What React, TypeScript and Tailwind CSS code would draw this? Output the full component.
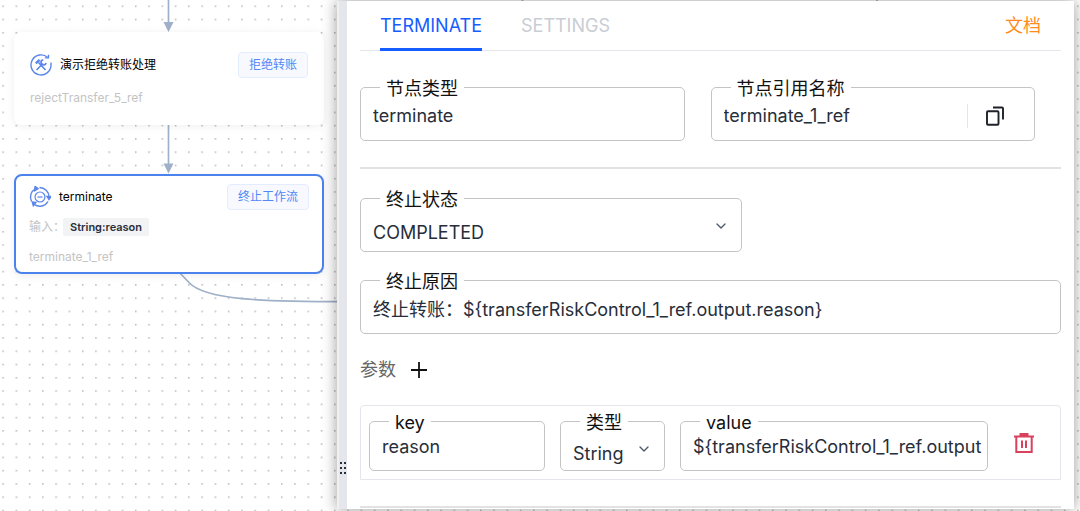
import { useState } from "react";
import type { ReactNode } from "react";
import { ChevronDown } from "lucide-react";

const inputClass =
  "w-full min-w-0 bg-transparent text-lg leading-6 text-[#272e3b] outline-none";

function Field({
  id,
  label,
  className = "",
  children,
}: {
  id: string;
  label: string;
  className?: string;
  children: ReactNode;
}) {
  return (
    <fieldset className={`min-w-0 rounded-[5px] border border-[#c4c4c4] ${className}`}>
      <legend className="ml-[19px] px-1.5 text-lg leading-[21px] text-[#111]">
        <label htmlFor={id} className="block pt-[3px]">
          {label}
        </label>
      </legend>
      {children}
    </fieldset>
  );
}

function SelectBox({
  id,
  value,
  onChange,
  options,
  className,
}: {
  id: string;
  value: string;
  onChange: (v: string) => void;
  options: string[];
  className: string;
}) {
  return (
    <div className="relative">
      <select
        id={id}
        value={value}
        onChange={(e) => onChange(e.target.value)}
        className={`block appearance-none px-3 pt-1 ${inputClass} ${className}`}
      >
        {options.map((o) => (
          <option key={o}>{o}</option>
        ))}
      </select>
      <ChevronDown
        className="pointer-events-none absolute top-2 right-3 size-4 text-[#4e5969]"
        strokeWidth={2}
      />
    </div>
  );
}

function ToolsIcon() {
  return (
    <svg viewBox="0 0 22 22" className="size-[22px]" fill="none" stroke="#5b86ec" strokeWidth="1.4">
      <path d="M17.800 3.600A10 10 0 1 0 21 11V8.500" />
      <path d="M14.800 3.900h3.700V.8" />
      <path d="M8.500 8.500l7 7.500M13 9.500L6.500 16" strokeWidth="1.600" />
      <path d="M5.800 9.300l3.800-3.400" strokeWidth="2.400" />
      <path d="M13.200 5.800a2.600 2.600 0 1 0 2.900 3.200" strokeWidth="1.700" />
    </svg>
  );
}

function TerminateIcon() {
  return (
    <svg viewBox="0 0 22 22" className="size-[22px]" fill="none" stroke="#5b86ec" strokeWidth="1.400">
      <path d="M10.500 1.500A9.500 9.500 0 0 1 20 11M19 15.500A9.500 9.500 0 0 1 5.500 18.700M2.600 15.500A9.500 9.500 0 0 1 6.300 2.800" />
      <circle cx="11" cy="11" r="5" strokeWidth="1.200" />
      <path d="M8.500 11h5" strokeWidth="1.200" />
      <path d="M6 .300l3 2.300-3.200 2zM18 10.500h4l-2 3zM3.300 16l3.500.500-2.500 3.200z" fill="#5b86ec" />
    </svg>
  );
}

function Tag({ children }: { children: ReactNode }) {
  return (
    <span className="ml-auto rounded border border-[#e4edff] bg-[#f7f9ff] px-2.5 text-xs leading-6 text-[#5088f7]">
      {children}
    </span>
  );
}

function Canvas() {
  return (
    <svg className="absolute inset-0 h-full w-full" aria-hidden="true">
      <defs>
        <pattern id="dots" x="2.300" y="5.400" width="13.270" height="13.270" patternUnits="userSpaceOnUse">
          <circle cx=".8" cy=".8" r=".8" fill="#aaa" />
        </pattern>
      </defs>
      <rect width="100%" height="100%" fill="url(#dots)" />
      <g stroke="#9fb1c8" strokeWidth="1.700" fill="none">
        <path d="M168.500 0v24M168.500 120v46M522.500 0v4M877 0v4" />
        <path d="M178 271l11 11.500C205 300 262 301.700 345 301.700" />
      </g>
      <path d="M163.500 22h10l-5 10zM163.500 163.500h10l-5 10z" fill="#9fb1c8" />
    </svg>
  );
}

export default function App() {
  const [tab, setTab] = useState("TERMINATE");
  const [type, setType] = useState("terminate");
  const [refName, setRefName] = useState("terminate_1_ref");
  const [status, setStatus] = useState("COMPLETED");
  const [reason, setReason] = useState("终止转账：${transferRiskControl_1_ref.output.reason}");
  const [paramKey, setParamKey] = useState("reason");
  const [paramType, setParamType] = useState("String");
  const [paramValue, setParamValue] = useState("${transferRiskControl_1_ref.output");

  return (
    <div className="relative flex min-h-screen overflow-hidden bg-white font-['Inter','Noto_Sans_CJK_SC',sans-serif]">
      <Canvas />

      <div className="relative w-[337px] shrink-0">
        <section className="absolute top-8 left-3.5 w-[310px] rounded-lg bg-white px-4 pt-5 pb-[19px] shadow-[0_1px_8px_rgba(0,0,0,0.07)]">
          <div className="flex items-center">
            <ToolsIcon />
            <h3 className="ml-2 text-xs text-black">演示拒绝转账处理</h3>
            <Tag>拒绝转账</Tag>
          </div>
          <p className="mt-3 text-xs leading-4 text-[#c4c4c4]">rejectTransfer_5_ref</p>
        </section>

        <section className="absolute top-[174px] left-3.5 w-[310px] rounded-lg border-2 border-[#4c82ee] bg-white px-[13px] pt-2 pb-[7px] shadow-[0_2px_8px_rgba(0,0,0,0.07)]">
          <div className="flex items-center">
            <TerminateIcon />
            <h3 className="ml-2 text-xs text-black">terminate</h3>
            <Tag>终止工作流</Tag>
          </div>
          <div className="mt-2 flex items-center text-xs leading-[18px] text-[#c4c4c4]">
            <span className="w-[34px] whitespace-nowrap">输入：</span>
            <span className="rounded-xs bg-[#f2f3f5] px-[7px] text-[11px] font-semibold text-[#272e3b]">
              String:reason
            </span>
          </div>
          <p className="mt-[13px] text-xs leading-4 text-[#c4c4c4]">terminate_1_ref</p>
        </section>
      </div>

      <aside className="relative mt-px mr-1.5 mb-0.5 flex min-w-0 flex-1 bg-white shadow-[0_0_14px_rgba(0,0,0,0.4)]">
        <div className="flex w-2.5 shrink-0 cursor-col-resize items-end border-l-2 border-[#f0f0f0] bg-[#e5e6eb] pb-[35px]">
          <svg viewBox="0 0 8 12" className="h-3 w-2" fill="#272e3b">
            <path d="M1 0h2v2H1zM5 0h2v2H5zM1 5h2v2H1zM5 5h2v2H5zM1 10h2v2H1zM5 10h2v2H5z" />
          </svg>
        </div>

        <div className="min-w-0 flex-1 px-[13px]">
          <div className="flex h-[50px] items-stretch border-b border-[#e5e6eb] px-5 text-lg">
            <button
              type="button"
              onClick={() => setTab("TERMINATE")}
              className={`-mb-px border-b-3 pt-[3px] ${
                tab === "TERMINATE" ? "border-[#165dff] text-[#165dff]" : "border-transparent text-[#c9cdd4]"
              }`}
            >
              TERMINATE
            </button>
            <button
              type="button"
              onClick={() => setTab("SETTINGS")}
              className={`-mb-px ml-[39px] border-b-3 pt-[3px] ${
                tab === "SETTINGS" ? "border-[#165dff] text-[#165dff]" : "border-transparent text-[#c9cdd4]"
              }`}
            >
              SETTINGS
            </button>
            <a href="#docs" className="ml-auto self-center text-[#ff8b1f]">
              文档
            </a>
          </div>

          <div className="grid grid-cols-2 pt-6">
            <div className="pr-[26px]">
              <Field id="type" label="节点类型">
                <input
                  id="type"
                  value={type}
                  onChange={(e) => setType(e.target.value)}
                  className={`block h-[41px] px-3 pb-[9px] ${inputClass}`}
                />
              </Field>
            </div>
            <div className="pr-[26px]">
              <Field id="refName" label="节点引用名称">
                <div className="flex h-[41px] items-center pb-[7px]">
                  <input
                    id="refName"
                    value={refName}
                    onChange={(e) => setRefName(e.target.value)}
                    className={`px-3 ${inputClass}`}
                  />
                  <button
                    type="button"
                    aria-label="复制"
                    className="flex h-6 w-[67px] shrink-0 items-center border-l border-[#e5e6eb] pl-[17px]"
                  >
                    <svg viewBox="0 0 20 20" className="size-5" fill="none" stroke="#1d2129" strokeWidth="1.900">
                      <path d="M8 1.500h9a1 1 0 0 1 1 1v11" />
                      <rect x="2" y="5.300" width="11.500" height="13.500" rx="1" />
                    </svg>
                  </button>
                </div>
              </Field>
            </div>
          </div>

          <hr className="mt-[26px] border-t-2 border-[#e2e2e2]" />

          <Field id="status" label="终止状态" className="mt-[17px] w-[382px] max-w-full">
            <SelectBox
              id="status"
              value={status}
              onChange={setStatus}
              options={["COMPLETED", "FAILED", "TERMINATED"]}
              className="h-[41px]"
            />
          </Field>

          <Field id="reason" label="终止原因" className="mt-4">
            <input
              id="reason"
              value={reason}
              onChange={(e) => setReason(e.target.value)}
              className={`block h-[41px] px-3 pb-[9px] ${inputClass}`}
            />
          </Field>

          <div className="mt-6 flex h-6 items-center gap-3.5">
            <h4 className="text-lg leading-6 text-[#666]">参数</h4>
            <button type="button" aria-label="添加参数">
              <svg viewBox="0 0 18 18" className="size-[18px]" fill="none" stroke="#111" strokeWidth="1.800">
                <path d="M9 1v16M1 9h16" />
              </svg>
            </button>
          </div>

          <div className="mt-[23px] grid grid-cols-[4fr_105px_7fr_42px] gap-[15px] rounded-t border border-[#e5e6eb] pt-[3px] pr-[15px] pb-2 pl-2">
            <Field id="paramKey" label="key">
              <input
                id="paramKey"
                value={paramKey}
                onChange={(e) => setParamKey(e.target.value)}
                className={`block h-[37px] px-3 pb-[11px] ${inputClass}`}
              />
            </Field>
            <Field id="paramType" label="类型">
              <SelectBox
                id="paramType"
                value={paramType}
                onChange={setParamType}
                options={["String", "Number", "Boolean"]}
                className="h-[37px]"
              />
            </Field>
            <Field id="paramValue" label="value">
              <input
                id="paramValue"
                value={paramValue}
                onChange={(e) => setParamValue(e.target.value)}
                className={`block h-[37px] pr-1 pb-[11px] pl-3 ${inputClass}`}
              />
            </Field>
            <button type="button" aria-label="删除" className="flex items-center justify-center pt-1.5">
              <svg viewBox="0 0 20 20" className="size-5" fill="none" stroke="#d9415d" strokeWidth="2">
                <path d="M0 3.600h20M2.300 3.600V19h15.400V3.600M8 7.500v7.500M12 7.500v7.500" />
                <path d="M5.500 1.500h9" strokeWidth="3" />
              </svg>
            </button>
          </div>

          <hr className="mt-[26px] border-t-2 border-[#e2e2e2]" />
        </div>
      </aside>
    </div>
  );
}
